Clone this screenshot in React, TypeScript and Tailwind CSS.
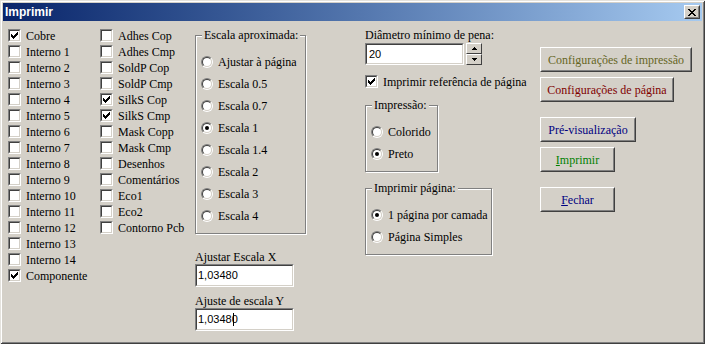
import React from "react";

const Check = ({ checked }: { checked?: boolean }) => (
  <div className="w-[13px] h-[13px] shrink-0 border border-t-[#808080] border-l-[#808080] border-r-white border-b-white">
    <div className="w-full h-full border border-t-[#404040] border-l-[#404040] border-r-[#d4d0c8] border-b-[#d4d0c8] bg-white">
      {checked && (
        <svg width="9" height="9" viewBox="0 0 9 9" shapeRendering="crispEdges" className="block">
          <rect x="1" y="3" width="1" height="3" fill="#000" />
          <rect x="2" y="4" width="1" height="3" fill="#000" />
          <rect x="3" y="5" width="1" height="3" fill="#000" />
          <rect x="4" y="4" width="1" height="3" fill="#000" />
          <rect x="5" y="3" width="1" height="3" fill="#000" />
          <rect x="6" y="2" width="1" height="3" fill="#000" />
          <rect x="7" y="1" width="1" height="3" fill="#000" />
        </svg>
      )}
    </div>
  </div>
);

const Radio = ({ checked }: { checked?: boolean }) => (
  <div className="w-[12px] h-[12px] shrink-0 rounded-full border border-t-[#808080] border-l-[#808080] border-r-white border-b-white">
    <div className="w-full h-full rounded-full border border-t-[#404040] border-l-[#404040] border-r-[#d4d0c8] border-b-[#d4d0c8] bg-white flex items-center justify-center">
      {checked && <div className="w-[4px] h-[4px] rounded-full bg-black" />}
    </div>
  </div>
);

const CheckRow = ({ label, checked }: { label: string; checked?: boolean }) => (
  <div className="h-[16px] flex items-start gap-[5px]">
    <div className="mt-[1px]">
      <Check checked={checked} />
    </div>
    <span className="leading-[16px] whitespace-nowrap">{label}</span>
  </div>
);

const RadioRow = ({ label, checked }: { label: string; checked?: boolean }) => (
  <div className="h-[22px] flex items-center gap-[5px]">
    <Radio checked={checked} />
    <span className="leading-[16px] whitespace-nowrap">{label}</span>
  </div>
);

const Group = ({
  title,
  className,
  children,
}: {
  title: string;
  className?: string;
  children: React.ReactNode;
}) => (
  <div
    className={
      "border border-[#808080] shadow-[inset_1px_1px_0_#fff,1px_1px_0_#fff] pl-[5px] pb-[6px] " +
      (className ?? "")
    }
  >
    <div className="-mt-[8px] ml-[1px] w-fit px-[2px] bg-[#d4d0c8] leading-[14px] whitespace-nowrap">
      {title}
    </div>
    <div className="mt-[9px] flex flex-col">{children}</div>
  </div>
);

const Field = ({
  className,
  children,
}: {
  className?: string;
  children: React.ReactNode;
}) => (
  <div
    className={
      "border border-t-[#808080] border-l-[#808080] border-r-white border-b-white " + (className ?? "")
    }
  >
    <div className="w-full h-full border border-t-[#404040] border-l-[#404040] border-r-[#d4d0c8] border-b-[#d4d0c8] bg-white flex items-center pl-[1px] font-['Liberation_Sans',sans-serif] text-[11px]">
      {children}
    </div>
  </div>
);

const Button = ({
  className,
  color,
  children,
}: {
  className?: string;
  color: string;
  children: React.ReactNode;
}) => (
  <div
    className={
      "h-[25px] border border-t-white border-l-white border-r-[#404040] border-b-[#404040] " + (className ?? "")
    }
  >
    <div
      className={
        "w-full h-full border border-t-[#d4d0c8] border-l-[#d4d0c8] border-r-[#808080] border-b-[#808080] flex items-center justify-center whitespace-nowrap " +
        color
      }
    >
      {children}
    </div>
  </div>
);

export default function App() {
  const col1: [string, boolean?][] = [
    ["Cobre", true],
    ["Interno 1"],
    ["Interno 2"],
    ["Interno 3"],
    ["Interno 4"],
    ["Interno 5"],
    ["Interno 6"],
    ["Interno 7"],
    ["Interno 8"],
    ["Interno 9"],
    ["Interno 10"],
    ["Interno 11"],
    ["Interno 12"],
    ["Interno 13"],
    ["Interno 14"],
    ["Componente", true],
  ];
  const col2: [string, boolean?][] = [
    ["Adhes Cop"],
    ["Adhes Cmp"],
    ["SoldP Cop"],
    ["SoldP Cmp"],
    ["SilkS Cop", true],
    ["SilkS Cmp", true],
    ["Mask Copp"],
    ["Mask Cmp"],
    ["Desenhos"],
    ["Comentários"],
    ["Eco1"],
    ["Eco2"],
    ["Contorno Pcb"],
  ];
  const scales: [string, boolean?][] = [
    ["Ajustar à página"],
    ["Escala 0.5"],
    ["Escala 0.7"],
    ["Escala 1", true],
    ["Escala 1.4"],
    ["Escala 2"],
    ["Escala 3"],
    ["Escala 4"],
  ];

  return (
    <div className="w-[705px] h-[344px] bg-[#d4d0c8] p-[3px] flex flex-col shadow-[inset_1px_1px_0_#e4e2dd,inset_-1px_-1px_0_#404040,inset_2px_2px_0_#fff,inset_-2px_-2px_0_#808080] font-['Liberation_Serif',serif] text-[12px] text-black overflow-hidden">
      {/* Title bar */}
      <div className="h-[18px] shrink-0 flex items-center justify-between pl-[2px] pr-[2px] bg-gradient-to-r from-[#0a246a] to-[#a6caf0]">
        <span className="font-['Liberation_Sans',sans-serif] font-bold text-[12px] text-white leading-[14px]">
          Imprimir
        </span>
        <div className="w-[16px] h-[14px] border border-t-white border-l-white border-r-[#404040] border-b-[#404040]">
          <div className="w-full h-full bg-[#d4d0c8] border border-t-[#d4d0c8] border-l-[#d4d0c8] border-r-[#808080] border-b-[#808080] flex items-center justify-center">
            <svg width="8" height="7" viewBox="0 0 8 7" shapeRendering="crispEdges" className="block">
              <path d="M0 0h2v1h-2zM6 0h2v1h-2zM1 1h2v1h-2zM5 1h2v1h-2zM2 2h4v1h-4zM3 3h2v1h-2zM2 4h4v1h-4zM1 5h2v1h-2zM5 5h2v1h-2zM0 6h2v1h-2zM6 6h2v1h-2z" fill="#000" />
            </svg>
          </div>
        </div>
      </div>

      {/* Body */}
      <div className="flex pt-[7px] pl-[5px]">
        <div className="w-[92px] flex flex-col">
          {col1.map(([l, c]) => (
            <CheckRow key={l} label={l} checked={c} />
          ))}
        </div>
        <div className="w-[95px] flex flex-col">
          {col2.map(([l, c]) => (
            <CheckRow key={l} label={l} checked={c} />
          ))}
        </div>
        <div className="w-[111px] flex flex-col">
          <Group title="Escala aproximada:" className="mt-[7px] w-[111px] pb-[5px]">
            {scales.map(([l, c]) => (
              <RadioRow key={l} label={l} checked={c} />
            ))}
          </Group>
          <div className="mt-[17px] leading-[13px]">Ajustar Escala X</div>
          <Field className="w-[99px] h-[23px]">1,03480</Field>
          <div className="mt-[8px] leading-[13px]">Ajuste de escala Y</div>
          <Field className="w-[99px] h-[23px]">
            1,0348
            <span className="inline-block w-[1px] h-[13px] bg-black -mr-[2px] ml-[1px]" />
            0
          </Field>
        </div>

        <div className="w-[175px] ml-[59px] flex flex-col">
          <div className="leading-[15px] whitespace-nowrap">Diâmetro mínimo de pena:</div>
          <div className="flex gap-[2px]">
            <Field className="w-[99px] h-[22px]">
              <span className="pl-[1px]">20</span>
            </Field>
            <div className="w-[16px] h-[22px] flex flex-col">
              {[0, 1].map((i) => (
                <div
                  key={i}
                  className="h-[11px] border border-t-white border-l-white border-r-[#404040] border-b-[#404040] bg-[#d4d0c8] flex items-center justify-center"
                >
                  <svg width="5" height="3" viewBox="0 0 5 3" shapeRendering="crispEdges" className="block">
                    {i === 0 ? (
                      <path d="M2 0h1v1h1v1h1v1h-5v-1h1v-1h1z" fill="#000" />
                    ) : (
                      <path d="M0 0h5v1h-1v1h-1v1h-1v-1h-1v-1h-1z" fill="#000" />
                    )}
                  </svg>
                </div>
              ))}
            </div>
          </div>
          <div className="mt-[9px]">
            <CheckRow label="Imprimir referência de página" checked />
          </div>
          <Group title="Impressão:" className="mt-[15px] w-[73px]">
            <RadioRow label="Colorido" />
            <RadioRow label="Preto" checked />
          </Group>
          <Group title="Imprimir página:" className="mt-[16px] w-[127px]">
            <RadioRow label="1 página por camada" checked />
            <RadioRow label="Página Simples" />
          </Group>
        </div>

        <div className="flex flex-col">
          <Button className="mt-[19px] w-[152px]" color="text-[#66661f]">
            Configurações de impressão
          </Button>
          <Button className="mt-[5px] w-[134px]" color="text-[#800000]">
            Configurações de página
          </Button>
          <Button className="mt-[15px] w-[96px]" color="text-[#000080]">
            Pré-visualização
          </Button>
          <Button className="mt-[5px] w-[75px]" color="text-[#008000]">
            <span>
              <span className="underline">I</span>mprimir
            </span>
          </Button>
          <Button className="mt-[15px] w-[75px]" color="text-[#000080]">
            <span>
              <span className="underline">F</span>echar
            </span>
          </Button>
        </div>
      </div>
    </div>
  );
}
